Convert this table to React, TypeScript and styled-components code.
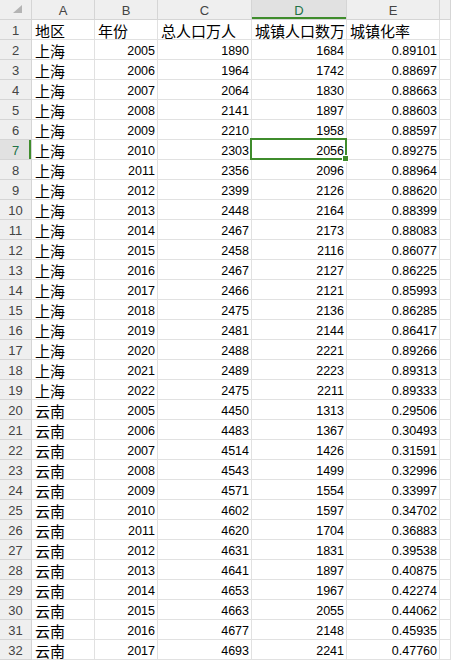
import React from "react";
import styled, { createGlobalStyle, css } from "styled-components";

const GlobalStyle = createGlobalStyle`
  html, body { margin: 0; padding: 0; background: #ffffff; }
  body { width: 451px; height: 660px; overflow: hidden; }
`;

const GREEN_TEXT = "#217346";
const GREEN = "#3f8c2c";

const Sheet = styled.div`
  display: grid;
  grid-template-columns: 32px 63px 63px 94px 95px 93px 1fr;
  grid-auto-rows: 20px;
  width: 451px;
  height: 660px;
  overflow: hidden;
  background: #ffffff;
  font-family: "Liberation Sans", "Noto Sans CJK SC", sans-serif;
`;

const HeaderCell = styled.div<{ $active?: boolean }>`
  position: relative;
  box-sizing: border-box;
  display: flex;
  align-items: center;
  justify-content: center;
  background: ${(p) => (p.$active ? "#e1e1e1" : "#efefef")};
  border-right: 1px solid #d5d5d5;
  border-bottom: 1px solid #d5d5d5;
  color: ${(p) => (p.$active ? GREEN_TEXT : "#444444")};
  font-size: 13px;
  padding-top: 1px;
  ${(p) =>
    p.$active &&
    css`
      box-shadow: inset 0 -2px 0 ${GREEN};
    `}
`;

const RowHeader = styled.div<{ $active?: boolean }>`
  box-sizing: border-box;
  display: flex;
  align-items: center;
  justify-content: center;
  background: ${(p) => (p.$active ? "#e1e1e1" : "#efefef")};
  border-right: 1px solid #d5d5d5;
  border-bottom: 1px solid #d5d5d5;
  color: ${(p) => (p.$active ? GREEN_TEXT : "#444444")};
  font-size: 13px;
  padding-top: 2px;
  ${(p) =>
    p.$active &&
    css`
      box-shadow: inset -2px 0 0 ${GREEN};
    `}
`;

const Corner = styled.div`
  position: relative;
  box-sizing: border-box;
  background: #efefef;
  border-right: 1px solid #d5d5d5;
  border-bottom: 1px solid #d5d5d5;
`;

const CornerMark = styled.svg`
  position: absolute;
  left: 13px;
  top: 5px;
`;

const Cell = styled.div<{ $num?: boolean }>`
  position: relative;
  box-sizing: border-box;
  display: flex;
  align-items: center;
  justify-content: ${(p) => (p.$num ? "flex-end" : "flex-start")};
  border-right: 1px solid #e1e1e1;
  border-bottom: 1px solid #e1e1e1;
  padding: ${(p) => (p.$num ? "3px 2px 0 0" : "1px 0 0 3px")};
  color: #000000;
  font-size: ${(p) => (p.$num ? "12.5px" : "15px")};
  white-space: nowrap;
  overflow: visible;
`;

const Selection = styled.div`
  position: absolute;
  left: -2px;
  top: -2px;
  right: -1px;
  bottom: -1px;
  border: 2px solid ${GREEN};
  pointer-events: none;
  z-index: 2;
`;

const FillHandle = styled.div`
  position: absolute;
  right: -4px;
  bottom: -4px;
  width: 5px;
  height: 5px;
  background: ${GREEN};
  border: 1px solid #ffffff;
  z-index: 3;
`;

type Row = [string, number, number, number, string];

const data: Row[] = [
  ["上海", 2005, 1890, 1684, "0.89101"],
  ["上海", 2006, 1964, 1742, "0.88697"],
  ["上海", 2007, 2064, 1830, "0.88663"],
  ["上海", 2008, 2141, 1897, "0.88603"],
  ["上海", 2009, 2210, 1958, "0.88597"],
  ["上海", 2010, 2303, 2056, "0.89275"],
  ["上海", 2011, 2356, 2096, "0.88964"],
  ["上海", 2012, 2399, 2126, "0.88620"],
  ["上海", 2013, 2448, 2164, "0.88399"],
  ["上海", 2014, 2467, 2173, "0.88083"],
  ["上海", 2015, 2458, 2116, "0.86077"],
  ["上海", 2016, 2467, 2127, "0.86225"],
  ["上海", 2017, 2466, 2121, "0.85993"],
  ["上海", 2018, 2475, 2136, "0.86285"],
  ["上海", 2019, 2481, 2144, "0.86417"],
  ["上海", 2020, 2488, 2221, "0.89266"],
  ["上海", 2021, 2489, 2223, "0.89313"],
  ["上海", 2022, 2475, 2211, "0.89333"],
  ["云南", 2005, 4450, 1313, "0.29506"],
  ["云南", 2006, 4483, 1367, "0.30493"],
  ["云南", 2007, 4514, 1426, "0.31591"],
  ["云南", 2008, 4543, 1499, "0.32996"],
  ["云南", 2009, 4571, 1554, "0.33997"],
  ["云南", 2010, 4602, 1597, "0.34702"],
  ["云南", 2011, 4620, 1704, "0.36883"],
  ["云南", 2012, 4631, 1831, "0.39538"],
  ["云南", 2013, 4641, 1897, "0.40875"],
  ["云南", 2014, 4653, 1967, "0.42274"],
  ["云南", 2015, 4663, 2055, "0.44062"],
  ["云南", 2016, 4677, 2148, "0.45935"],
  ["云南", 2017, 4693, 2241, "0.47760"],
];

const columns = ["A", "B", "C", "D", "E", ""];
const ACTIVE_COL = "D";
const ACTIVE_ROW = 7;

export default function App() {
  return (
    <>
      <GlobalStyle />
      <Sheet>
        <Corner>
          <CornerMark width="9" height="8" viewBox="0 0 9 8">
            <polygon points="9,0 9,8 0,8" fill="#b4b4b4" />
          </CornerMark>
        </Corner>
        {columns.map((c, i) => (
          <HeaderCell key={i} $active={c === ACTIVE_COL}>
            {c}
          </HeaderCell>
        ))}

        <RowHeader>1</RowHeader>
        <Cell>地区</Cell>
        <Cell>年份</Cell>
        <Cell>总人口万人</Cell>
        <Cell>城镇人口数万</Cell>
        <Cell>城镇化率</Cell>
        <Cell />

        {data.map((r, idx) => {
          const rowNo = idx + 2;
          const active = rowNo === ACTIVE_ROW;
          return (
            <React.Fragment key={rowNo}>
              <RowHeader $active={active}>{rowNo}</RowHeader>
              <Cell>{r[0]}</Cell>
              <Cell $num>{r[1]}</Cell>
              <Cell $num>{r[2]}</Cell>
              <Cell $num>
                {r[3]}
                {active && (
                  <Selection>
                    <FillHandle />
                  </Selection>
                )}
              </Cell>
              <Cell $num>{r[4]}</Cell>
              <Cell />
            </React.Fragment>
          );
        })}
      </Sheet>
    </>
  );
}
